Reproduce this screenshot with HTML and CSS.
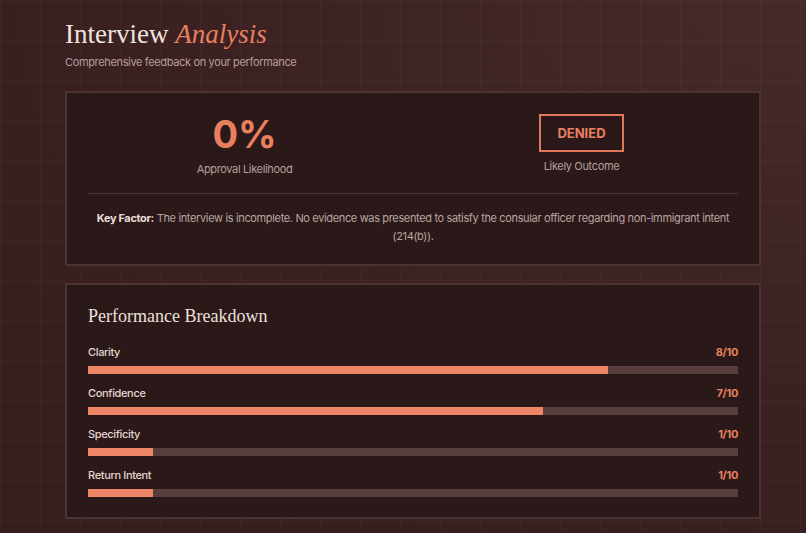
FILE: index.html
```html
<!DOCTYPE html>
<html lang="en">
<head>
<meta charset="utf-8">
<title>Interview Analysis</title>
<link rel="stylesheet" href="styles.css">
</head>
<body>
<main class="page">
  <header class="head">
    <h1 class="title">Interview <em>Analysis</em></h1>
    <p class="subtitle">Comprehensive feedback on your performance</p>
  </header>

  <section class="card summary">
    <div class="stats">
      <div class="stat">
        <div class="percent">0%</div>
        <div class="stat-label">Approval Likelihood</div>
      </div>
      <div class="stat">
        <div class="verdict">DENIED</div>
        <div class="stat-label">Likely Outcome</div>
      </div>
    </div>
    <hr class="divider">
    <p class="key"><strong>Key Factor:</strong> The interview is incomplete. No evidence was presented to satisfy the consular officer regarding non-immigrant intent (214(b)).</p>
  </section>

  <section class="card breakdown">
    <h2 class="section-title">Performance Breakdown</h2>
    <div class="metric">
      <div class="metric-row"><span class="metric-name">Clarity</span><span class="metric-score">8/10</span></div>
      <div class="track"><div class="fill" style="width:80%"></div></div>
    </div>
    <div class="metric">
      <div class="metric-row"><span class="metric-name">Confidence</span><span class="metric-score">7/10</span></div>
      <div class="track"><div class="fill" style="width:70%"></div></div>
    </div>
    <div class="metric">
      <div class="metric-row"><span class="metric-name">Specificity</span><span class="metric-score">1/10</span></div>
      <div class="track"><div class="fill" style="width:10%"></div></div>
    </div>
    <div class="metric">
      <div class="metric-row"><span class="metric-name">Return Intent</span><span class="metric-score">1/10</span></div>
      <div class="track"><div class="fill" style="width:10%"></div></div>
    </div>
  </section>
</main>
</body>
</html>
```
FILE: styles.css
```css
html, body {
  margin: 0;
  padding: 0;
}
body {
  min-height: 533px;
  background-color: #3a2021;
  background-image:
    linear-gradient(rgba(255,255,255,0.022) 1px, transparent 1px),
    linear-gradient(90deg, rgba(255,255,255,0.022) 1px, transparent 1px),
    radial-gradient(ellipse at 100% 0%, #462a2a 0%, #3a2021 60%, #361d1e 100%);
  background-size: 40px 40px, 40px 40px, 100% 100%;
  font-family: Inter, "Liberation Sans", sans-serif;
  letter-spacing: -0.35px;
  color: #e6d6d1;
}
.page {
  width: 696px;
  padding: 17px 0 0 65px;
}
.head {
  margin-bottom: 22px;
}
.title {
  margin: 0;
  font-family: "Liberation Serif", serif;
  font-weight: 400;
  font-size: 27px;
  line-height: 34px;
  letter-spacing: 0;
  color: #f1e4de;
}
.title em {
  color: #e8805f;
  font-style: italic;
}
.subtitle {
  margin: 4px 0 0;
  font-size: 11px;
  line-height: 14px;
  color: #b59e99;
}
.card {
  background: #2b1819;
  border: 2px solid #4b3534;
}
.summary {
  padding: 21px 21px 19px;
}
.stats {
  display: grid;
  grid-template-columns: 1fr 1fr;
  column-gap: 24px;
}
.stat {
  display: flex;
  flex-direction: column;
  align-items: center;
}
.percent {
  font-size: 38px;
  line-height: 40px;
  font-weight: 700;
  letter-spacing: 0;
  color: #e8805f;
}
.percent + .stat-label {
  margin-top: 9px;
}
.verdict {
  border: 2px solid #e0785a;
  padding: 9px 16px;
  font-size: 13px;
  line-height: 16px;
  font-weight: 700;
  letter-spacing: 0;
  color: #e8805f;
}
.verdict + .stat-label {
  margin-top: 8px;
}
.stat-label {
  font-size: 11px;
  line-height: 13px;
  color: #b3a09c;
}
.divider {
  margin: 17px 0 0;
  border: 0;
  border-top: 1px solid #4a3434;
}
.key {
  margin: 15px 0 0;
  text-align: center;
  font-size: 11px;
  line-height: 18px;
  color: #b9a6a1;
}
.key strong {
  color: #eadcd7;
  font-weight: 700;
}
.breakdown {
  margin-top: 17px;
  padding: 20px 21px 20px;
}
.section-title {
  margin: 0 0 18px;
  font-family: "Liberation Serif", serif;
  font-weight: 400;
  font-size: 18px;
  line-height: 22px;
  letter-spacing: 0;
  color: #ede0db;
}
.metric + .metric {
  margin-top: 12px;
}
.metric-row {
  display: flex;
  justify-content: space-between;
  font-size: 11px;
  line-height: 14px;
}
.metric-name {
  color: #e4d5d0;
  font-weight: 500;
}
.metric-score {
  color: #e8805f;
  font-weight: 700;
}
.track {
  margin-top: 7px;
  height: 8px;
  background: #573d3d;
}
.fill {
  height: 100%;
  background: #ee8566;
}
```
